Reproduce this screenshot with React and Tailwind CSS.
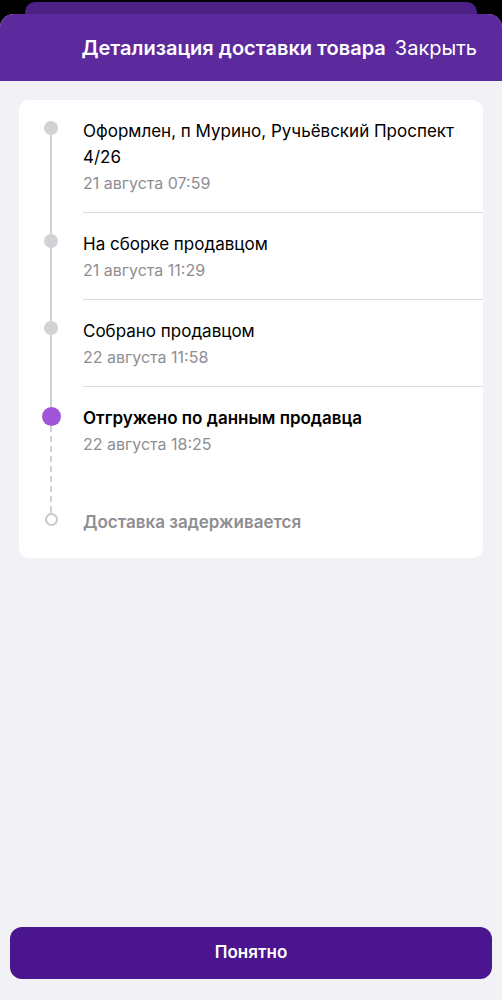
const STEPS = [
  {
    title: "Оформлен, п Мурино, Ручьёвский Проспект 4/26",
    date: "21 августа 07:59",
  },
  { title: "На сборке продавцом", date: "21 августа 11:29" },
  { title: "Собрано продавцом", date: "22 августа 11:58" },
];

const DASHED =
  "w-[2px] bg-[repeating-linear-gradient(to_bottom,#cfcfd4_0px,#cfcfd4_6px,transparent_6px,transparent_10px)]";

const StepRow = ({ step, first }) => (
  <div className="flex">
    <div className="w-[64px] shrink-0 flex flex-col items-center">
      <div
        className={`h-[21px] w-[2px] ${first ? "bg-transparent" : "bg-[#d1d1d6]"}`}
      />
      <div className="w-[14px] h-[14px] rounded-full bg-[#d1d1d6]" />
      <div className="flex-1 w-[2px] bg-[#d1d1d6]" />
    </div>
    <div className="flex-1 border-b border-[#dcdce0] pt-[18px] pb-[18px] pr-[20px]">
      <p className="text-[17px] leading-[26px] text-black">{step.title}</p>
      <p className="mt-[2px] text-[16px] leading-[22px] text-[#8e8e93]">
        {step.date}
      </p>
    </div>
  </div>
);

export default function App() {
  return (
    <div
      className="h-[1000px] w-[502px] bg-black pt-[2px] flex flex-col overflow-hidden"
      style={{ fontFamily: "Inter, 'Noto Sans', sans-serif" }}
    >
      <div className="mx-[25px] h-[12px] rounded-t-[10px] bg-[#4b2186] shrink-0" />
      <div className="flex-1 flex flex-col rounded-t-[14px] overflow-hidden bg-[#f2f1f6]">
        <div className="h-[67px] shrink-0 bg-[#5c2a9c] flex items-center justify-end pr-[25px] gap-[9px] text-white text-[20px]">
          <span className="font-semibold">Детализация доставки товара</span>
          <span>Закрыть</span>
        </div>

        <div className="flex-1 flex flex-col px-[19px] pt-[19px]">
          <div className="bg-white rounded-[10px]">
            {STEPS.map((s, i) => (
              <StepRow key={i} step={s} first={i === 0} />
            ))}

            <div className="flex">
              <div className="w-[64px] shrink-0 flex flex-col items-center">
                <div className="h-[20px] w-[2px] bg-[#d1d1d6]" />
                <div className="w-[19px] h-[19px] rounded-full bg-[#a055d8]" />
                <div className={`flex-1 ${DASHED}`} />
              </div>
              <div className="flex-1 pt-[18px] pb-[54px] pr-[20px]">
                <p className="text-[17px] leading-[26px] font-semibold text-black">
                  Отгружено по данным продавца
                </p>
                <p className="mt-[2px] text-[16px] leading-[22px] text-[#8e8e93]">
                  22 августа 18:25
                </p>
              </div>
            </div>

            <div className="flex">
              <div className="w-[64px] shrink-0 flex flex-col items-center">
                <div className={`h-[4px] ${DASHED}`} />
                <div className="w-[13px] h-[13px] rounded-full border-2 border-[#c7c7cc] bg-white" />
              </div>
              <div className="flex-1 pb-[23px] pr-[20px]">
                <p className="text-[17px] leading-[26px] font-semibold text-[#8e8e93]">
                  Доставка задерживается
                </p>
              </div>
            </div>
          </div>
        </div>

        <div className="px-[10px] pb-[21px] shrink-0">
          <button className="w-full h-[52px] rounded-[12px] bg-[#4c1590] text-white text-[17px] font-semibold">
            Понятно
          </button>
        </div>
      </div>
    </div>
  );
}
